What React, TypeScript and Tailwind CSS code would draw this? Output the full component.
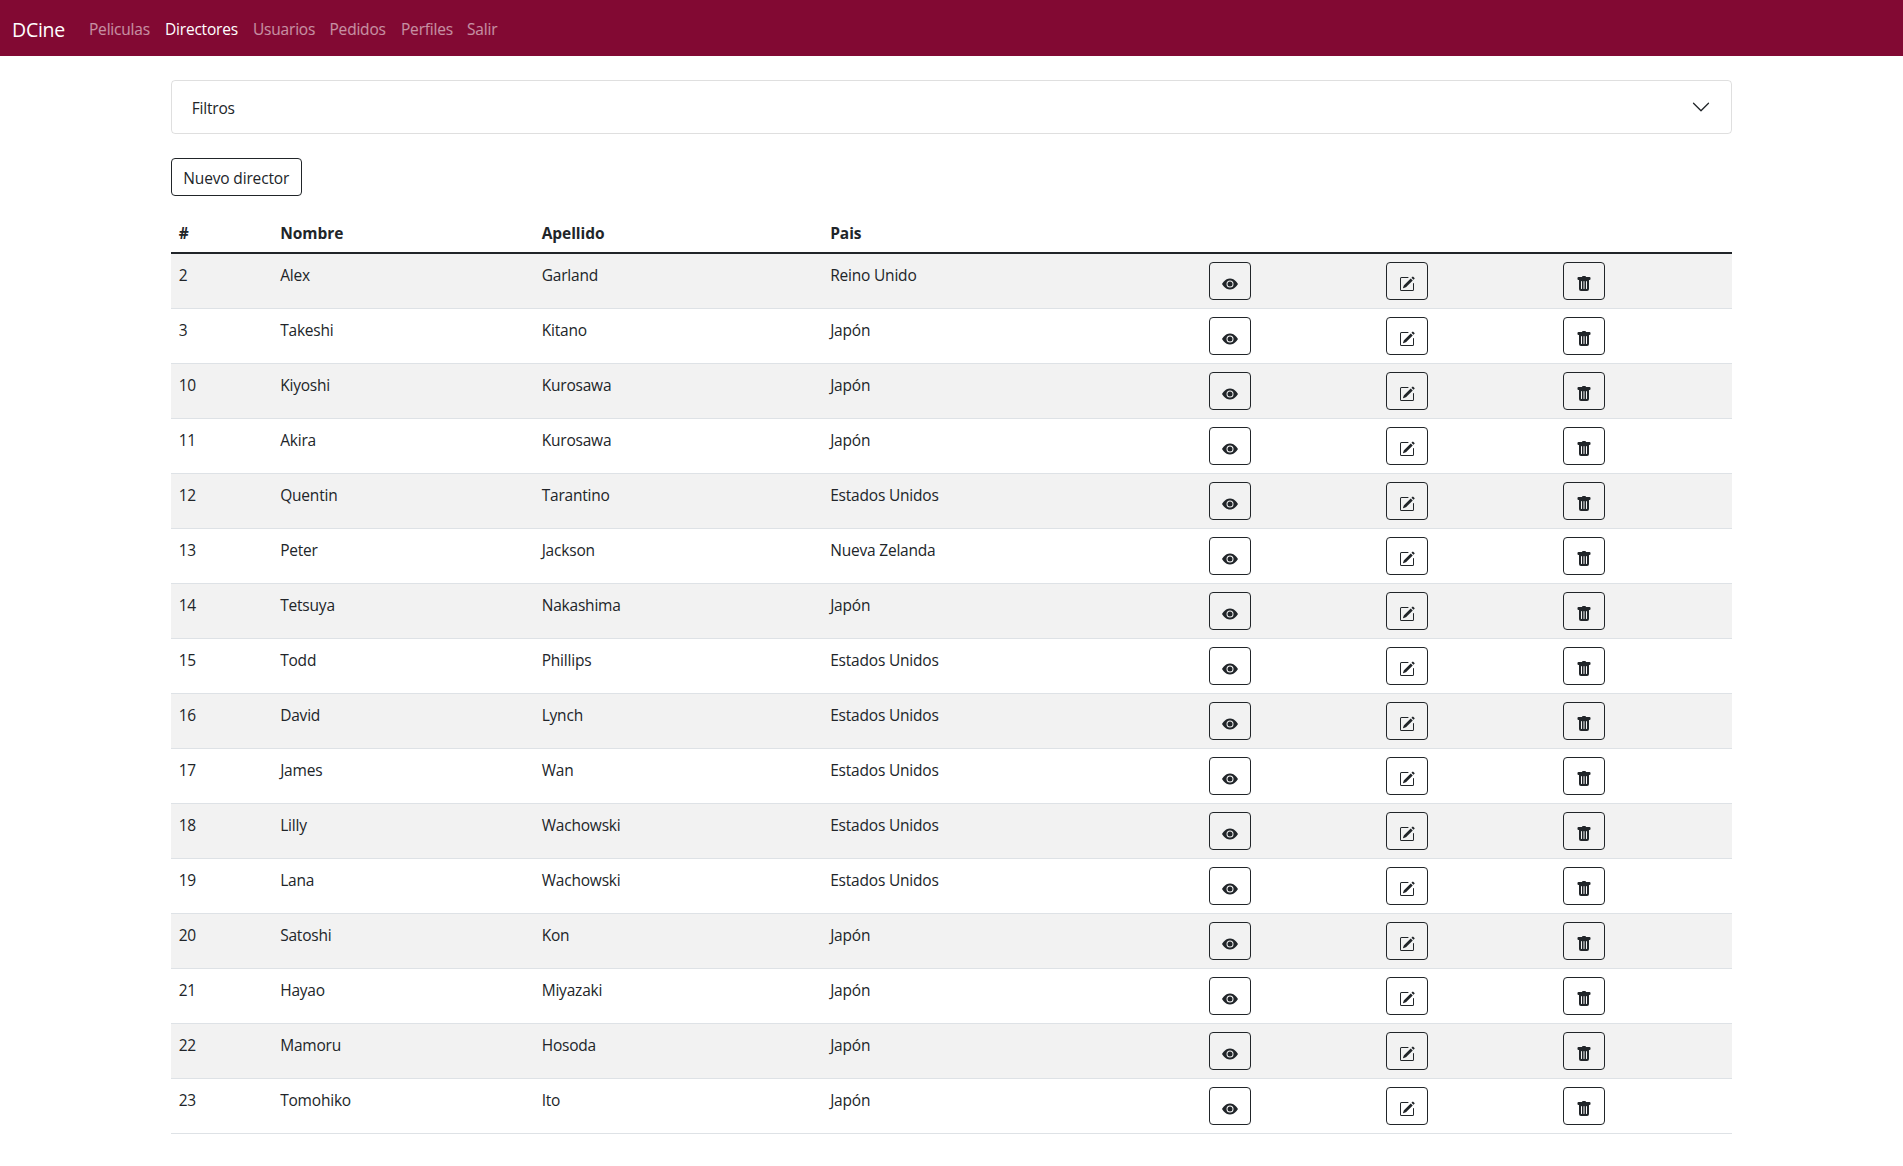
import type { ReactNode } from 'react';
import { BsEyeFill, BsPencilSquare, BsTrashFill } from 'react-icons/bs';

const navLinks = [
  { label: 'Peliculas', width: 'w-[76px]' },
  { label: 'Directores', width: 'w-[88px]', active: true },
  { label: 'Usuarios', width: 'w-[76.5px]' },
  { label: 'Pedidos', width: 'w-[71.5px]' },
  { label: 'Perfiles', width: 'w-[66px]' },
  { label: 'Salir', width: 'w-[47px]' },
];

const directors: [number, string, string, string][] = [
  [2, 'Alex', 'Garland', 'Reino Unido'],
  [3, 'Takeshi', 'Kitano', 'Japón'],
  [10, 'Kiyoshi', 'Kurosawa', 'Japón'],
  [11, 'Akira', 'Kurosawa', 'Japón'],
  [12, 'Quentin', 'Tarantino', 'Estados Unidos'],
  [13, 'Peter', 'Jackson', 'Nueva Zelanda'],
  [14, 'Tetsuya', 'Nakashima', 'Japón'],
  [15, 'Todd', 'Phillips', 'Estados Unidos'],
  [16, 'David', 'Lynch', 'Estados Unidos'],
  [17, 'James', 'Wan', 'Estados Unidos'],
  [18, 'Lilly', 'Wachowski', 'Estados Unidos'],
  [19, 'Lana', 'Wachowski', 'Estados Unidos'],
  [20, 'Satoshi', 'Kon', 'Japón'],
  [21, 'Hayao', 'Miyazaki', 'Japón'],
  [22, 'Mamoru', 'Hosoda', 'Japón'],
  [23, 'Tomohiko', 'Ito', 'Japón'],
];

function IconButton({ label, children }: { label: string; children: ReactNode }) {
  return (
    <button
      aria-label={label}
      className="flex h-[38px] w-[42px] justify-center rounded border border-[#212529] pt-[13px]"
    >
      {children}
    </button>
  );
}

function TextCell({ children }: { children: ReactNode }) {
  return <td className="h-[55px] border-b border-[#dee2e6] px-[7.4px] pt-[9px] pb-0">{children}</td>;
}

function ActionCell({ children }: { children: ReactNode }) {
  return <td className="h-[55px] border-b border-[#dee2e6] px-2 pt-2 pb-0">{children}</td>;
}

function Navbar() {
  return (
    <nav className="flex h-14 items-start bg-[#820933] px-3 text-white">
      <a className="mr-[13px] w-[56px] pt-[18px] text-[19.5px] leading-6 tracking-[-0.25px]">DCine</a>
      <ul className="flex pt-[17px] leading-6">
        {navLinks.map((link) => (
          <li key={link.label} className={`${link.width} shrink-0 pl-2 ${link.active ? 'text-white' : 'text-white/55'}`}>
            {link.label}
          </li>
        ))}
      </ul>
    </nav>
  );
}

export default function App() {
  return (
    <div className="min-h-screen bg-white font-['Open_Sans',sans-serif] text-[15.5px] leading-6 tracking-[-0.2px] text-[#212529]">
      <Navbar />
      <main className="mx-auto w-[82%] pt-6">
        <button className="flex h-[54px] w-full items-center justify-between rounded border border-black/[.125] pr-5 pl-[19.5px]">
          <span className="pt-[2px]">Filtros</span>
          <svg className="size-5" viewBox="0 0 16 16" fill="#212529">
            <path
              fillRule="evenodd"
              d="M1.646 4.646a.5.5 0 0 1 .708 0L8 10.293l5.646-5.647a.5.5 0 0 1 .708.708l-6 6a.5.5 0 0 1-.708 0l-6-6a.5.5 0 0 1 0-.708z"
            />
          </svg>
        </button>
        <button className="mt-6 block h-[38px] w-[131px] rounded border border-[#212529] pt-0.5 pl-[11px] text-left tracking-[-0.15px]">
          Nuevo director
        </button>
        <table className="mt-4 w-full table-fixed border-separate border-spacing-0 text-left">
          <colgroup>
            <col className="w-[101.5px]" />
            <col className="w-[261.5px]" />
            <col className="w-[288.5px]" />
            <col className="w-[378.5px]" />
            <col className="w-[177px]" />
            <col className="w-[177px]" />
            <col />
          </colgroup>
          <thead>
            <tr className="align-top">
              {['#', 'Nombre', 'Apellido', 'Pais', '', '', ''].map((title, i) => (
                <th key={i} className="h-[42px] border-b-2 border-[#212529] px-[7.4px] pt-[9px] pb-0 font-bold tracking-[-0.05px]">
                  {title}
                </th>
              ))}
            </tr>
          </thead>
          <tbody>
            {directors.map(([id, name, surname, country]) => (
              <tr key={id} className="align-top odd:bg-[#f2f2f2]">
                <TextCell>{id}</TextCell>
                <TextCell>{name}</TextCell>
                <TextCell>{surname}</TextCell>
                <TextCell>{country}</TextCell>
                <ActionCell>
                  <IconButton label="Ver">
                    <BsEyeFill className="size-4" />
                  </IconButton>
                </ActionCell>
                <ActionCell>
                  <IconButton label="Editar">
                    <BsPencilSquare className="size-4" />
                  </IconButton>
                </ActionCell>
                <ActionCell>
                  <IconButton label="Eliminar">
                    <BsTrashFill className="size-4" />
                  </IconButton>
                </ActionCell>
              </tr>
            ))}
          </tbody>
        </table>
      </main>
    </div>
  );
}
